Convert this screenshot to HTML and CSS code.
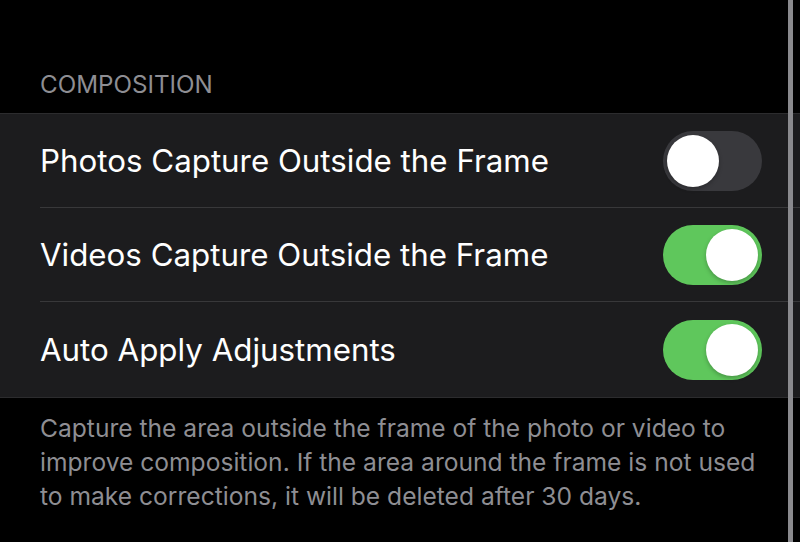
FILE: index.html
```html
<!DOCTYPE html>
<html>
<head>
<meta charset="utf-8">
<link rel="stylesheet" href="styles.css">
</head>
<body>
<div class="page">
  <div class="section-header">COMPOSITION</div>
  <div class="group">
    <div class="row">
      <span class="label">Photos Capture Outside the Frame</span>
      <span class="toggle off"><span class="knob"></span></span>
    </div>
    <div class="row">
      <span class="label">Videos Capture Outside the Frame</span>
      <span class="toggle on"><span class="knob"></span></span>
    </div>
    <div class="row last">
      <span class="label">Auto Apply Adjustments</span>
      <span class="toggle on"><span class="knob"></span></span>
    </div>
  </div>
  <p class="footer">Capture the area outside the frame of the photo or video to improve composition. If the area around the frame is not used to make corrections, it will be deleted after 30 days.</p>
  <div class="edge"></div>
</div>
</body>
</html>
```
FILE: styles.css
```css
html, body {
  margin: 0;
  padding: 0;
  background: #000;
}
.page {
  position: relative;
  width: 800px;
  height: 542px;
  overflow: hidden;
  font-family: Inter, "Noto Sans", sans-serif;
  color: #fff;
}
.section-header {
  padding: 70px 0 0 40px;
  height: 113px;
  box-sizing: border-box;
  font-size: 24.2px;
  line-height: 30px;
  color: #8e8e93;
}
.group {
  background: #1c1c1e;
  border-top: 1px solid #2c2c2e;
  border-bottom: 1px solid #2c2c2e;
}
.row {
  display: flex;
  align-items: center;
  justify-content: space-between;
  height: 93px;
  margin-left: 40px;
  padding-right: 38px;
  border-bottom: 1px solid #38383a;
}
.row.last {
  height: 95px;
  border-bottom: none;
}
.label {
  font-size: 31.3px;
}
.toggle {
  display: flex;
  align-items: center;
  width: 99px;
  height: 60px;
  border-radius: 30px;
  padding: 0 4px;
  box-sizing: border-box;
}
.toggle.off {
  background: #39393d;
  justify-content: flex-start;
}
.toggle.on {
  background: #5fc75c;
  justify-content: flex-end;
}
.knob {
  width: 52px;
  height: 52px;
  border-radius: 50%;
  background: #fff;
  box-shadow: 0 2px 4px rgba(0,0,0,0.25);
}
.footer {
  margin: 13px 0 0 40px;
  width: 730px;
  font-size: 24.6px;
  line-height: 34px;
  color: #8e8e93;
}
.edge {
  position: absolute;
  top: 0;
  left: 788px;
  width: 5px;
  height: 542px;
  background: #8a8a8e;
}
```
